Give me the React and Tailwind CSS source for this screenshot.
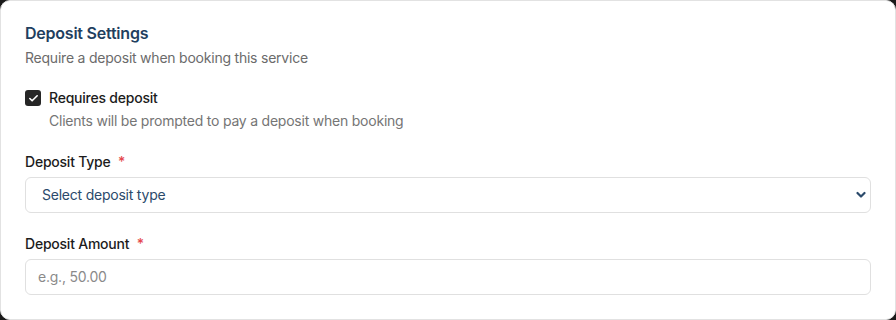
import React from "react";

export default function App() {
  return (
    <div className="w-[896px] h-[320px] bg-[#1a1a1a] tracking-[-0.014em]" style={{ fontFamily: "Inter, 'Noto Sans', sans-serif" }}>
      <div className="w-full h-full bg-white border border-[#e2e2e2] rounded-[10px] px-6 pt-[20px]">
        {/* Header */}
        <h3 className="text-base leading-6 font-semibold text-[#1f3f5f]">Deposit Settings</h3>
        <p className="mt-[3px] text-sm leading-5 text-[#6b6b6b]">Require a deposit when booking this service</p>

        {/* Checkbox */}
        <div className="mt-[20px] flex items-start gap-2">
          <div className="mt-[2px] w-4 h-4 rounded-[3px] bg-[#262626] flex items-center justify-center">
            <svg width="11" height="11" viewBox="0 0 24 24" fill="none" stroke="white" strokeWidth="3.5" strokeLinecap="round" strokeLinejoin="round">
              <path d="M20 6 9 17l-5-5" />
            </svg>
          </div>
          <div>
            <div className="text-sm leading-5 font-medium text-[#1c1c1c]">Requires deposit</div>
            <div className="mt-[3px] text-sm leading-5 text-[#757575]">Clients will be prompted to pay a deposit when booking</div>
          </div>
        </div>

        {/* Deposit Type */}
        <div className="mt-[21px]">
          <label className="block text-sm leading-5 font-medium text-[#1c1c1c]">
            Deposit Type <span className="ml-1 text-[#e5484d]">*</span>
          </label>
          <div className="relative mt-[5px]">
            <div className="h-9 w-full border border-[#e0e0e0] rounded-md flex items-center pl-4 text-sm text-[#2b4a6b]">
              Select deposit type
            </div>
            <svg className="absolute right-[5px] top-[14px]" width="10" height="8" viewBox="0 0 10 8" fill="none" stroke="#2b4a6b" strokeWidth="2.2" strokeLinecap="round" strokeLinejoin="round">
              <path d="M1.5 2 5 5.5 8.5 2" />
            </svg>
          </div>
        </div>

        {/* Deposit Amount */}
        <div className="mt-[21px]">
          <label className="block text-sm leading-5 font-medium text-[#1c1c1c]">
            Deposit Amount <span className="ml-1 text-[#e5484d]">*</span>
          </label>
          <div className="mt-[5px] h-9 w-full border border-[#e0e0e0] rounded-md flex items-center px-3 text-sm text-[#8a8a8a]">
            e.g., 50.00
          </div>
        </div>
      </div>
    </div>
  );
}
